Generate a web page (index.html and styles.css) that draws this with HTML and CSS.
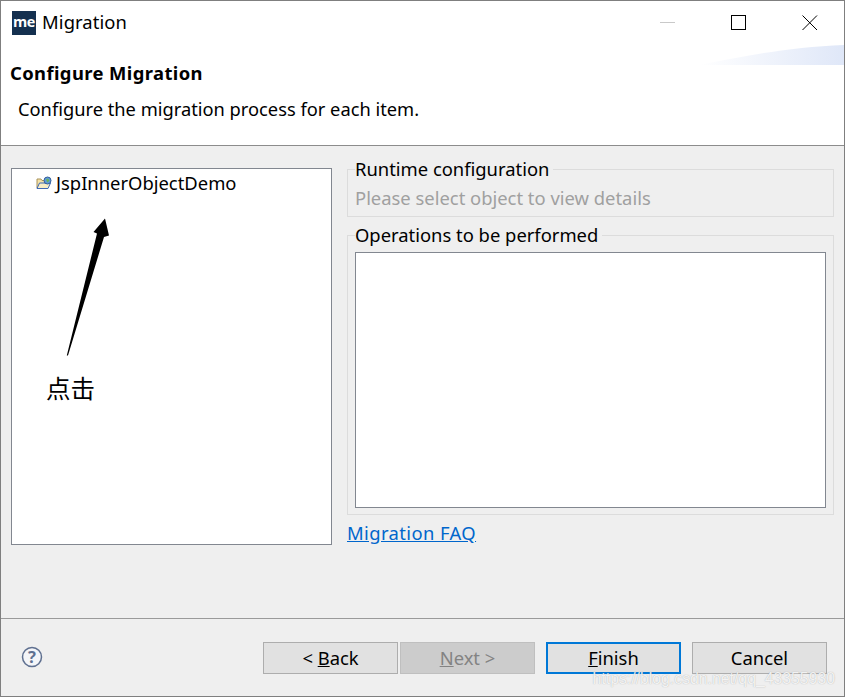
FILE: index.html
```html
<!DOCTYPE html>
<html lang="en">
<head>
<meta charset="utf-8">
<title>Migration</title>
<link rel="stylesheet" href="styles.css">
</head>
<body>
<div class="window">
  <div class="titlebar">
    <span class="logo">me</span>
    <span class="title">Migration</span>
    <div class="controls">
      <svg class="ctl" width="16" height="16" viewBox="0 0 16 16"><path d="M0 7.5H15" stroke="#c9c9c9" fill="none"/></svg>
      <svg class="ctl" width="16" height="16" viewBox="0 0 16 16"><rect x=".5" y=".5" width="14" height="14" stroke="#000" fill="none"/></svg>
      <svg class="ctl" width="16" height="16" viewBox="0 0 16 16"><path d="M.5 .5L15 15M15 .5L.5 15" stroke="#000" fill="none"/></svg>
    </div>
  </div>
  <header class="banner">
    <svg class="swoosh" width="145" height="20" viewBox="0 0 145 20">
      <defs><linearGradient id="sw" x1="0" x2="1" y1="0" y2="0"><stop offset="0" stop-color="#fff"/><stop offset="1" stop-color="#dfe7f8"/></linearGradient></defs>
      <path d="M0 20C40 12 90 2 145 0V20Z" fill="url(#sw)"/>
    </svg>
    <h1 class="banner-title">Configure Migration</h1>
    <p class="banner-text">Configure the migration process for each item.</p>
  </header>
  <main class="content">
    <div class="tree">
      <div class="tree-row">
        <svg width="16" height="14" viewBox="0 0 16 14">
          <path d="M1 12V3h4l1 1.500h6V7" fill="#f5e3a8" stroke="#a8925a"/>
          <path d="M1 12.500L3.500 7H14.500L12 12.500Z" fill="#f8edc4" stroke="#3f68b5"/>
          <circle cx="11.500" cy="4.500" r="3.500" fill="#5f9bd6" stroke="#355f9c"/>
          <path d="M10 3.500l2-1 1.500 2-2 2z" fill="#69b35a"/>
        </svg>
        <span>JspInnerObjectDemo</span>
      </div>
      <svg class="arrow" width="60" height="150" viewBox="0 0 60 150">
        <path d="M43 .5L31.500 14L35 15.500L4.800 137.500H6L42 19L47 17.500Z" fill="#000"/>
      </svg>
      <span class="note">点击</span>
    </div>
    <div class="details">
      <fieldset class="group">
        <legend class="legend">Runtime configuration</legend>
        <div class="hint">Please select object to view details</div>
      </fieldset>
      <fieldset class="group group-ops">
        <legend class="legend">Operations to be performed</legend>
        <div class="ops-box"></div>
      </fieldset>
      <a class="faq" href="#">Migration FAQ</a>
    </div>
  </main>
  <footer class="footer">
    <svg class="help" width="22" height="22" viewBox="0 0 22 22">
      <circle cx="11" cy="11" r="9.500" fill="#f4f5f8" stroke="#5f7090" stroke-width="1.500"/>
      <text x="11" y="17" text-anchor="middle" class="help-mark">?</text>
    </svg>
    <div class="buttons">
      <button class="btn" type="button">&lt; <u>B</u>ack</button>
      <button class="btn btn-disabled" type="button"><u>N</u>ext &gt;</button>
      <button class="btn btn-default" type="button"><u>F</u>inish</button>
      <button class="btn" type="button">Cancel</button>
    </div>
  </footer>
  <span class="watermark">https://blog.csdn.net/qq_43355930</span>
</div>
</body>
</html>
```
FILE: styles.css
```css
* { box-sizing: border-box; }
html, body { margin: 0; padding: 0; }
body {
  font-family: "Noto Sans", "Noto Sans CJK SC", sans-serif;
  font-size: 18.4px;
  color: #000;
  background: #efefef;
}
.window {
  position: relative;
  width: 845px;
  height: 697px;
  border: 1px solid #7f7f7f;
  display: flex;
  flex-direction: column;
  background: #efefef;
  overflow: hidden;
}
.titlebar {
  height: 44px;
  background: #fff;
  display: flex;
  align-items: center;
  padding-left: 11px;
}
.logo {
  width: 24px;
  height: 24px;
  background: #14304f;
  color: #fff;
  font: 700 14.500px/22px "Open Sans", sans-serif;
  text-align: center;
  letter-spacing: -.5px;
}
.title { margin: -2px 0 0 6px; line-height: 24px; letter-spacing: .1px; }
.controls {
  margin-left: auto;
  display: flex;
  align-items: center;
  gap: 55px;
  padding-right: 26px;
}
.ctl { display: block; }
.banner {
  position: relative;
  height: 101px;
  background: #fff;
  border-bottom: 1px solid #8c8c8c;
}
.swoosh { position: absolute; right: 0; top: 0; }
.banner-title {
  position: relative;
  margin: 0;
  padding: 15px 0 0 9px;
  font-size: 18.4px;
  line-height: 26px;
  font-weight: 700;
  letter-spacing: .4px;
}
.banner-text {
  margin: 0;
  padding: 10px 0 0 17px;
  font-size: 18.3px;
  line-height: 26px;
}
.content {
  flex: 1;
  display: flex;
  gap: 15px;
  padding: 11px 10px 0;
}
.tree {
  position: relative;
  width: 321px;
  height: 377px;
  margin-top: 11px;
  background: #fff;
  border: 1px solid #828790;
}
.tree-row {
  display: flex;
  align-items: center;
  gap: 4px;
  padding: 2px 0 0 24px;
  line-height: 24px;
}
.arrow { position: absolute; left: 50px; top: 49px; }
.note {
  position: absolute;
  left: 34px;
  top: 204px;
  font-family: "Noto Sans CJK SC", sans-serif;
  font-size: 24.500px;
  line-height: 30px;
}
.details { width: 487px; }
.group {
  margin: 0;
  padding: 0 7px;
  border: 1px solid #dcdcdc;
  min-width: 0;
}
.group-ops { margin-top: 6px; padding-bottom: 6px; }
.legend {
  padding: 0 4px 0 0;
  margin-left: 0;
  line-height: 24px;
  background: #efefef;
}
.hint {
  height: 35px;
  line-height: 34px;
  color: #a0a0a0;
}
.ops-box {
  height: 256px;
  margin-top: 5px;
  background: #fff;
  border: 1px solid #828790;
}
.faq {
  display: block;
  margin-top: 6px;
  line-height: 24px;
  color: #0066cc;
  letter-spacing: .4px;
}
.footer {
  height: 78px;
  border-top: 1px solid #9a9a9a;
  display: flex;
  align-items: flex-start;
  padding: 23px 17px 0 20px;
}
.help { margin-top: 4px; display: block; }
.help-mark {
  font: 700 16.500px "Noto Sans", sans-serif;
  fill: #5f7090;
}
.buttons { margin-left: auto; display: flex; }
.btn {
  width: 135px;
  height: 32px;
  padding: 0;
  margin-left: 11px;
  background: #e1e1e1;
  border: 1px solid #adadad;
  font: inherit;
  line-height: 28px;
  color: #000;
}
.btn:first-child { margin-left: 0; }
.btn-disabled {
  margin-left: 2px;
  background: #cccccc;
  border-color: #bfbfbf;
  color: #838383;
}
.btn-default { border: 2px solid #0078d7; }
.watermark {
  position: absolute;
  right: 9px;
  bottom: 6px;
  font-family: "Liberation Sans", sans-serif;
  font-size: 15.800px;
  line-height: 22px;
  color: rgba(255, 255, 255, .85);
  text-shadow: 0 0 1px rgba(120, 120, 120, .6);
}
```
